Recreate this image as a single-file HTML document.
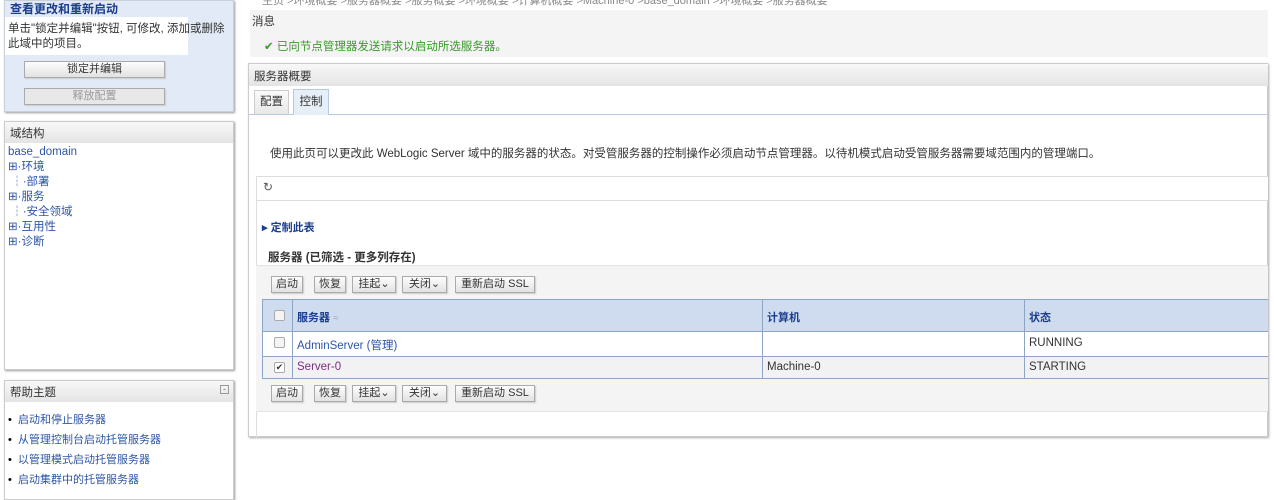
<!DOCTYPE html>
<html><head><meta charset="utf-8"><style>
*{box-sizing:border-box;margin:0;padding:0}
body{width:1274px;height:491px;overflow:hidden;background:#fff;font-family:"Liberation Sans","Noto Sans CJK SC",sans-serif;font-size:11px;color:#333;position:relative}
.a{position:absolute;white-space:nowrap}
.hd{background:linear-gradient(#f8f8f8,#e4e4e4);color:#333;font-size:11.5px;padding:3px 5px}
.btn{position:absolute;height:17px;border:1px solid #aaa;background:linear-gradient(#fdfdfd,#e2e2e2);font-size:11px;text-align:center;line-height:15px;color:#333;box-shadow:1px 1px 1px #ccc}
.lnk{color:#2d56a6}
.tree div{height:15px;line-height:15px}
</style></head><body>
<div class="a" style="left:4px;top:0;width:230px;height:112px;background:#e2eaf7;border:1px solid #c8d0dc;box-shadow:1px 1px 2px #999"></div>
<div class="a" style="left:10px;top:0;color:#1a3e8c;font-size:12px;font-weight:bold">查看更改和重新启动</div>
<div class="a" style="left:5px;top:17px;width:183px;height:38px;background:#fff"></div>
<div class="a" style="left:8px;top:22px;font-size:11.5px;line-height:15px;white-space:normal;width:225px">单击"锁定并编辑"按钮, 可修改, 添加或删除此域中的项目。</div>
<div class="btn" style="left:24px;top:61px;width:141px">锁定并编辑</div>
<div class="btn" style="left:24px;top:88px;width:141px;color:#999;background:#e8e8e8">释放配置</div>
<div class="a" style="left:4px;top:121px;width:230px;height:249px;border:1px solid #ccc;box-shadow:1px 1px 2px #999;background:#fff"></div>
<div class="a hd" style="left:5px;top:122px;width:228px;height:21px">域结构</div>
<div class="a tree lnk" style="left:8px;top:145px;font-size:11.5px">
<div>base_domain</div><div>⊞·环境</div><div>&nbsp;┆·部署</div><div>⊞·服务</div><div>&nbsp;┆·安全领域</div><div>⊞·互用性</div><div>⊞·诊断</div></div>
<div class="a" style="left:4px;top:380px;width:230px;height:120px;border:1px solid #ccc;box-shadow:1px 1px 2px #999;background:#fff"></div>
<div class="a hd" style="left:5px;top:381px;width:228px;height:21px">帮助主题</div>
<div class="a" style="left:220px;top:385px;width:9px;height:9px;border:1px solid #999;font-size:9px;line-height:6px;text-align:center;color:#666">-</div>
<div class="a lnk" style="left:8px;top:410px;line-height:20px;font-size:11px">
<div><span style="color:#000">•</span>&nbsp;&nbsp;启动和停止服务器</div><div><span style="color:#000">•</span>&nbsp;&nbsp;从管理控制台启动托管服务器</div><div><span style="color:#000">•</span>&nbsp;&nbsp;以管理模式启动托管服务器</div><div><span style="color:#000">•</span>&nbsp;&nbsp;启动集群中的托管服务器</div></div>
<div class="a" style="left:262px;top:-8px;color:#888;font-size:11px">主页 &gt;环境概要 &gt;服务器概要 &gt;服务概要 &gt;环境概要 &gt;计算机概要 &gt;Machine-0 &gt;base_domain &gt;环境概要 &gt;服务器概要</div>
<div class="a" style="left:250px;top:10px;width:1018px;height:47px;background:#f4f4f4"></div>
<div class="a" style="left:252px;top:13px;font-size:11.5px">消息</div>
<div class="a" style="left:264px;top:38px;color:#3a9a2a;font-size:11.5px"><span style="color:#3a9a2a">✔</span> 已向节点管理器发送请求以启动所选服务器。</div>
<div class="a" style="left:248px;top:63px;width:1020px;height:374px;border:1px solid #ccc;box-shadow:1px 1px 2px #aaa;background:#fff"></div>
<div class="a hd" style="left:249px;top:64px;width:1019px;height:22px;padding-top:4px">服务器概要</div>
<div class="a" style="left:249px;top:114px;width:1019px;height:1px;background:#b8c8e0"></div>
<div class="a" style="left:254px;top:90px;width:35px;height:24px;border:1px solid #ccc;border-bottom:none;background:linear-gradient(#fafafa,#e8e8e8);text-align:center;line-height:22px;font-size:11.5px">配置</div>
<div class="a" style="left:293px;top:89px;width:36px;height:26px;border:1px solid #b8c8e0;border-bottom:none;background:#e6eef8;text-align:center;line-height:24px;font-size:11.5px">控制</div>
<div class="a" style="left:270px;top:145px;font-size:11.5px">使用此页可以更改此 WebLogic Server 域中的服务器的状态。对受管服务器的控制操作必须启动节点管理器。以待机模式启动受管服务器需要域范围内的管理端口。</div>
<div class="a" style="left:256px;top:176px;width:1012px;height:25px;border:1px solid #ddd;border-right:none;background:#fff"></div>
<div class="a" style="left:263px;top:180px;font-size:12px;color:#555">↻</div>
<div class="a" style="left:256px;top:198px;width:1012px;height:240px;border-left:1px solid #ddd"></div>
<div class="a lnk" style="left:262px;top:219px;font-weight:bold;color:#1a3e8c">▸ 定制此表</div>
<div class="a" style="left:268px;top:249px;font-weight:bold;font-size:11.5px">服务器 (已筛选 - 更多列存在)</div>
<div class="a" style="left:256px;top:265px;width:1012px;height:147px;background:#f4f4f4;border-top:1px solid #e4e4e4;border-bottom:1px solid #e4e4e4"></div>
<div class="btn" style="left:271px;top:276px;width:32px">启动</div>
<div class="btn" style="left:314px;top:276px;width:32px">恢复</div>
<div class="btn" style="left:352px;top:276px;width:44px">挂起⌄</div>
<div class="btn" style="left:402px;top:276px;width:45px">关闭⌄</div>
<div class="btn" style="left:455px;top:276px;width:80px">重新启动 SSL</div>
<div class="a" style="left:262px;top:299px;width:1006px;height:80px;border:1px solid #8ea4c4;border-right:none;background:#fff"></div>
<div class="a" style="left:263px;top:300px;width:1005px;height:32px;background:#cfdcef;border-bottom:1px solid #8ea4c4"></div>
<div class="a" style="left:263px;top:356px;width:1005px;height:22px;background:#f2f2f2;border-top:1px solid #8ea4c4"></div>
<div class="a" style="left:292px;top:300px;width:1px;height:78px;background:#8ea4c4"></div>
<div class="a" style="left:762px;top:300px;width:1px;height:78px;background:#8ea4c4"></div>
<div class="a" style="left:1024px;top:300px;width:1px;height:78px;background:#8ea4c4"></div>
<div class="a" style="left:274px;top:310px;width:11px;height:11px;border:1px solid #aaa;border-radius:2px;background:#f4f4f4"></div>
<div class="a" style="left:274px;top:337px;width:11px;height:11px;border:1px solid #aaa;border-radius:2px;background:#f4f4f4"></div>
<div class="a" style="left:274px;top:362px;width:11px;height:11px;border:1px solid #aaa;border-radius:2px;background:#fff;font-size:9px;line-height:9px;text-align:center">✔</div>
<div class="a" style="left:297px;top:309px;font-weight:bold;color:#1a3e8c">服务器 <span style="color:#aaa;font-weight:normal;font-size:10px">≈</span></div>
<div class="a" style="left:767px;top:309px;font-weight:bold;color:#1a3e8c">计算机</div>
<div class="a" style="left:1029px;top:309px;font-weight:bold;color:#1a3e8c">状态</div>
<div class="a lnk" style="left:297px;top:337px;font-size:11.5px">AdminServer (管理)</div>
<div class="a" style="left:1029px;top:337px;font-size:11.5px">RUNNING</div>
<div class="a" style="left:297px;top:360px;font-size:11.5px;color:#7b2c85;top:361px">Server-0</div>
<div class="a" style="left:767px;top:361px;font-size:11.5px">Machine-0</div>
<div class="a" style="left:1029px;top:361px;font-size:11.5px">STARTING</div>
<div class="btn" style="left:271px;top:385px;width:32px">启动</div>
<div class="btn" style="left:314px;top:385px;width:32px">恢复</div>
<div class="btn" style="left:352px;top:385px;width:44px">挂起⌄</div>
<div class="btn" style="left:402px;top:385px;width:45px">关闭⌄</div>
<div class="btn" style="left:455px;top:385px;width:80px">重新启动 SSL</div>
</body></html>
